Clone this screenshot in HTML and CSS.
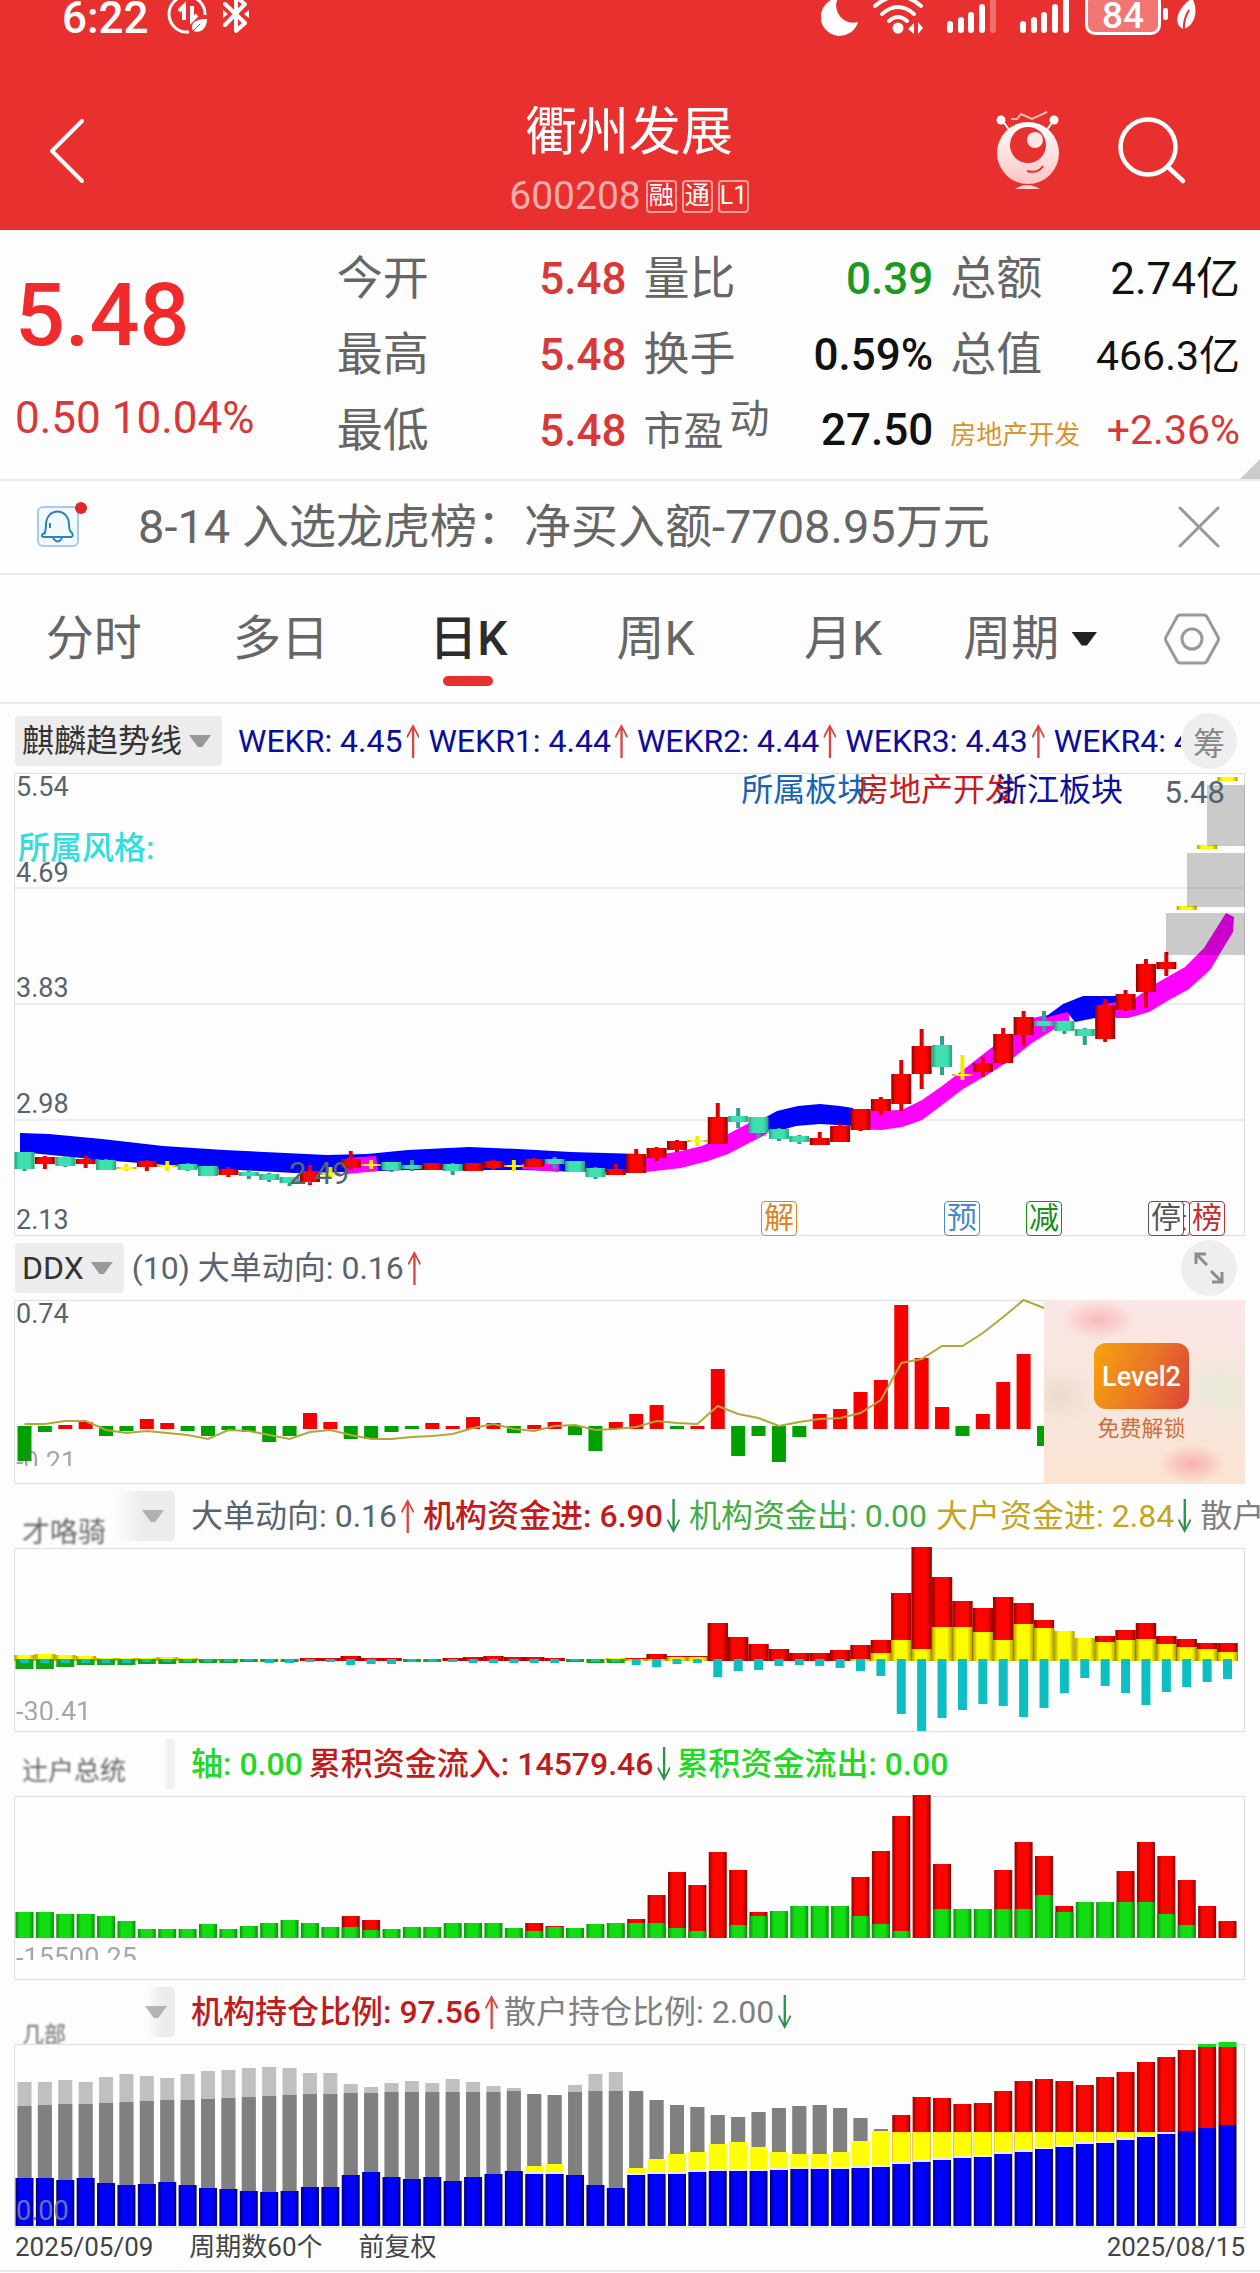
FILE: index.html
```html
<!DOCTYPE html>
<html lang="zh-CN">
<head>
<meta charset="utf-8">
<meta name="viewport" content="width=device-width, initial-scale=1">
<title>衢州发展 600208</title>
<link rel="stylesheet" href="styles.css">
</head>
<body>
<header class="top">
  <div class="status">
    <div class="status-side">
      <span class="clock">6:22</span>
      <svg width="42" height="36" viewBox="166 0 42 36" fill="none" stroke="#fff"><path d="M189 32A18 18 0 1 1 205 15" stroke-width="3"/><path d="M179 11l5-5v14M192 6v14l5-5" stroke-width="4"/><path d="M193 31c-4-10 6-12 14-12 0 8-5 15-14 12z" fill="#fff" stroke="none"/><path d="M191 33l9-9" stroke="#e8302f" stroke-width="1"/></svg>
      <svg width="30" height="36" viewBox="221 0 30 36" fill="none" stroke="#fff" stroke-width="4" stroke-linecap="round" stroke-linejoin="round"><path d="M225 4l20 19-9 8V-3l9 7-20 21"/><path d="M223 10l5 4-5 4zM249 10l-5 4 5 4z" fill="#fff" stroke="none"/></svg>
    </div>
    <div class="status-side">
      <svg width="39" height="36" viewBox="821 0 39 36"><path d="M838-2a17 17 0 0 0 20 24A19 19 0 1 1 838-2z" fill="#fff"/></svg>
      <svg width="60" height="36" viewBox="873 0 60 36" fill="none" stroke="#fff" stroke-width="4" stroke-linecap="round"><path d="M875 6q23-20 46 0M882 14q16-14 32 0M889 21q9-8 18 0"/><circle cx="898" cy="28" r="5.500" fill="#fff" stroke="none"/><path d="M908 29l6-6v11zM918 22v12l5-6z" fill="#fff" stroke="none"/></svg>
      <svg width="60" height="36" viewBox="946 0 60 36" stroke="#fff" stroke-width="6" stroke-linecap="round"><path d="M950 24v6M961 20v10M971 15v15M982 7v23"/><path d="M993 0v30" opacity=".3"/></svg>
      <svg width="53" height="36" viewBox="1019 0 53 36" stroke="#fff" stroke-width="6" stroke-linecap="round"><path d="M1023 24v6M1034 20v10M1044 15v15M1055 7v23M1066 0v30"/></svg>
      <span class="battery">84</span>
      <svg width="34" height="36" viewBox="1162 0 34 36"><rect x="1163" y="8" width="5" height="12" rx="2" fill="#fff"/><path d="M1184 29c-10-3-10-18 8-31 7 12 3 27-8 31z" fill="#fff"/><path d="M1184 30q-1-10 5-20" fill="none" stroke="#e8302f" stroke-width="2"/></svg>
    </div>
  </div>
  <nav class="nav">
    <button class="icon-btn back" aria-label="返回"><svg width="40" height="70" viewBox="48 116 40 70" fill="none" stroke="#fff" stroke-width="4" stroke-linecap="round" stroke-linejoin="round"><path d="M82 121L52 151l30 30"/></svg></button>
    <div class="name">
      <h1>衢州发展</h1>
      <p class="code">600208 <span class="mark">融</span><span class="mark">通</span><span class="mark">L1</span></p>
    </div>
    <div class="nav-right">
      <button class="icon-btn" aria-label="助手"><svg width="66" height="84" viewBox="994 110 66 84"><defs><linearGradient id="face" x1="0" y1="0" x2="0" y2="1"><stop offset="0" stop-color="#fff"/><stop offset="1" stop-color="#ffc4c4"/></linearGradient></defs><g fill="none" stroke="#fff" stroke-width="2"><path d="M1002 120l8 11M1054 120l-8 11"/><path d="M1011 119h6l4-5 11 5 15-7" stroke="#ffb9b9"/></g><circle cx="1001" cy="120" r="4.500" fill="#fff"/><circle cx="1054" cy="120" r="4.500" fill="#fff"/><circle cx="1028" cy="153" r="31" fill="url(#face)"/><circle cx="1028" cy="145" r="18" fill="#e8302f"/><circle cx="1035" cy="140" r="8" fill="#ffe4e4"/><path d="M1027 171q11 3 16-5" fill="none" stroke="#e8302f" stroke-width="2"/><path d="M1015 189q12-8 25 0z" fill="#ffd0d0"/></svg></button>
      <button class="icon-btn" aria-label="搜索"><svg width="72" height="80" viewBox="1116 110 72 80" fill="none" stroke="#fff" stroke-width="4.500" stroke-linecap="round"><circle cx="1148" cy="147" r="27.500"/><path d="M1168 167l15 14"/></svg></button>
    </div>
  </nav>
</header>

<main>
<section class="quote">
  <div class="last"><strong>5.48</strong><span>0.50 10.04%</span></div>
  <dl>
    <div><dt>今开</dt><dd class="up">5.48</dd></div>
    <div><dt>最高</dt><dd class="up">5.48</dd></div>
    <div><dt>最低</dt><dd class="up">5.48</dd></div>
  </dl>
  <dl>
    <div><dt>量比</dt><dd class="down">0.39</dd></div>
    <div><dt>换手</dt><dd>0.59%</dd></div>
    <div><dt class="pe">市盈<sup>动</sup></dt><dd>27.50</dd></div>
  </dl>
  <dl>
    <div><dt>总额</dt><dd class="turnover">2.74亿</dd></div>
    <div><dt>总值</dt><dd class="amount">466.3亿</dd></div>
    <div><dt class="sector">房地产开发</dt><dd class="up amount">+2.36%</dd></div>
  </dl>
</section>

<section class="notice">
  <svg width="56" height="52" viewBox="34 502 56 52" fill="none" stroke="#2f80bd" stroke-width="2"><rect x="38" y="508" width="40" height="39" rx="5" fill="#f1faff" stroke="#a9c9ee"/><path d="M45 534c0-2 1-3 1-8 0-18 23-18 23 0 0 5 1 6 3 8 2 3 0 4-2 4H44c-3 0-3-3 1-4z"/><path d="M53 539q5 7 9 0M50 524v5"/><circle cx="81" cy="509" r="6" fill="#e0282c" stroke="none"/></svg>
  <p>8-14 入选龙虎榜：净买入额-7708.95万元</p>
  <button class="icon-btn" aria-label="关闭"><svg width="42" height="42" viewBox="0 0 42 42" stroke="#999" stroke-width="3" stroke-linecap="round"><path d="M2 2l38 38M40 2L2 40"/></svg></button>
</section>

<nav class="tabs">
  <button>分时</button>
  <button>多日</button>
  <button class="active">日K</button>
  <button>周K</button>
  <button>月K</button>
  <button>周期<span class="caret dark"></span></button>
  <button class="settings" aria-label="设置"><svg width="56" height="52" viewBox="0 0 56 52" fill="none" stroke="#999" stroke-width="3" stroke-linejoin="round"><path d="M16 2h24q2 0 3 2l11 20q1 2 0 4L43 48q-1 2-3 2H16q-2 0-3-2L2 28q-1-2 0-4L13 4q1-2 3-2z"/><circle cx="28" cy="26" r="10"/></svg></button>
</nav>

<section class="panel">
  <div class="head main-head">
    <button class="selector">麒麟趋势线<span class="caret"></span></button>
    <div class="legend navy"><span>WEKR: 4.45<i class="arr up"></i></span><span>WEKR1: 4.44<i class="arr up"></i></span><span>WEKR2: 4.44<i class="arr up"></i></span><span>WEKR3: 4.43<i class="arr up"></i></span><span>WEKR4: 4.43</span></div>
    <button class="round">筹</button>
  </div>
  <div class="plot tall">
    <svg id="candles" viewBox="0 0 1231 463" preserveAspectRatio="none"></svg>
    <span class="axis a1">5.54</span><span class="axis a2">4.69</span><span class="axis a3">3.83</span><span class="axis a4">2.98</span><span class="axis a5">2.13</span>
    <span class="price low">2.49</span><span class="price high">5.48</span>
    <span class="note style-note">所属风格:</span>
    <span class="note board">所属板块:</span><span class="note industry">房地产开发</span><span class="note region">浙江板块</span>
    <span class="tag t1">解</span><span class="tag t2">预</span><span class="tag t3">减</span><span class="tag t4">涨</span><span class="tag t5">停</span><span class="tag t6">榜</span>
  </div>
</section>

<section class="panel">
  <div class="head">
    <button class="selector short">DDX<span class="caret"></span></button>
    <div class="legend slate"><span>(10) 大单动向: 0.16<i class="arr up"></i></span></div>
    <button class="round" aria-label="全屏"><svg width="30" height="32" viewBox="0 0 30 32" fill="none" stroke="#8c8c8c" stroke-width="3"><path d="M2 12V2h10M2 2l11 11M28 20v10H18M28 30L17 19"/></svg></button>
  </div>
  <div class="plot">
    <svg id="ddx" viewBox="0 0 1231 184" preserveAspectRatio="none"></svg>
    <span class="axis a1">0.74</span><span class="axis ghost g1">-0.21</span>
    <a class="promo" href="#level2"><span class="badge">Level2</span>免费解锁</a>
  </div>
</section>

<section class="panel">
  <div class="head">
    <button class="selector faded f3"><span class="smudge">才咯骑</span><span class="caret"></span></button>
    <div class="legend"><span class="slate">大单动向: 0.16<i class="arr up"></i></span><span class="red">机构资金进: 6.90<i class="arr dn"></i></span><span class="leaf">机构资金出: 0.00</span><span class="gold">大户资金进: 2.84<i class="arr dn"></i></span><span class="grey">散户资金进: 0.00</span></div>
  </div>
  <div class="plot">
    <svg id="funds" viewBox="0 0 1231 184" preserveAspectRatio="none"></svg>
    <span class="axis ghost g2">-30.41</span>
  </div>
</section>

<section class="panel">
  <div class="head">
    <button class="selector faded f4"><span class="smudge">辻户总统</span></button>
    <div class="legend tight"><span class="lime">轴: 0.00</span><span class="red">累积资金流入: 14579.46<i class="arr dn"></i></span><span class="lime">累积资金流出: 0.00</span></div>
  </div>
  <div class="plot">
    <svg id="flow" viewBox="0 0 1231 184" preserveAspectRatio="none"></svg>
    <span class="axis ghost g3">-15500.25</span>
  </div>
</section>

<section class="panel">
  <div class="head">
    <button class="selector faded f5"><span class="smudge">几部</span><span class="caret"></span></button>
    <div class="legend tight"><span class="red">机构持仓比例: 97.56<i class="arr up"></i></span><span class="grey">散户持仓比例: 2.00<i class="arr dn"></i></span></div>
  </div>
  <div class="plot">
    <svg id="holding" viewBox="0 0 1231 184" preserveAspectRatio="none"></svg>
    <span class="axis zero">0.00</span>
  </div>
</section>
</main>

<footer class="foot"><span>2025/05/09</span><span>周期数60个</span><span>前复权</span><span class="end">2025/08/15</span></footer>
<script src="charts.js"></script>
</body>
</html>
```
FILE: styles.css
```css
* { box-sizing: border-box; }
body {
  margin: 0;
  background: #fdfdfd;
  color: #333;
  font-family: Roboto, "Noto Sans CJK SC", sans-serif;
}
h1, p, dl, dd { margin: 0; }
button {
  margin: 0;
  padding: 0;
  border: 0;
  background: none;
  color: inherit;
  font: inherit;
}
svg { display: block; }

/* header */
.top { background: #e8302f; color: #fff; padding-bottom: 12px; }
.status {
  display: flex;
  justify-content: space-between;
  height: 40px;
  padding: 0 64px 0 62px;
}
.status-side { display: flex; align-items: flex-start; gap: 13px; }
.clock { font-size: 44px; line-height: 36px; font-weight: 500; margin-right: 4px; }
.battery {
  width: 76px;
  height: 43px;
  margin: -8px -12px 0 0;
  border: 3px solid #fff;
  border-radius: 10px;
  background: #f07573;
  font-size: 37px;
  line-height: 42px;
  font-weight: 500;
  text-align: center;
}
.nav {
  display: grid;
  grid-template-columns: 1fr auto 1fr;
  padding: 62px 72px 0 48px;
}
.icon-btn { display: block; }
.back { align-self: start; padding-top: 14px; }
.name { text-align: center; margin-left: 22px; }
.name h1 { font-size: 52px; line-height: 62px; font-weight: 400; }
.code {
  display: flex;
  align-items: center;
  gap: 5px;
  margin-top: 10px;
  font-size: 39px;
  line-height: 44px;
  color: #f8adad;
}
.mark {
  width: 31px;
  height: 33px;
  border: 2px solid #f6a0a0;
  border-radius: 4px;
  color: #fff;
  font-size: 25px;
  line-height: 28px;
}
.nav-right { display: flex; justify-content: flex-end; gap: 56px; align-items: flex-start; padding-top: 8px; }

/* quote */
.quote {
  position: relative;
  display: grid;
  grid-template-columns: 305fr 290fr 290fr 290fr;
  gap: 17px;
  padding: 9px 20px 12px 15px;
  border-bottom: 2px solid #ebebeb;
}
.quote::after {
  content: "";
  position: absolute;
  right: 0;
  bottom: 0;
  border: 10px solid #ccc;
  border-top-color: transparent;
  border-left-color: transparent;
}
.last { display: flex; flex-direction: column; color: #f12b2b; white-space: nowrap; }
.last strong { font-size: 88px; line-height: 100px; font-weight: 500; margin-top: 26px; }
.last span { font-size: 44px; line-height: 50px; margin-top: 28px; color: #d93838; }
.quote dl > div {
  display: flex;
  justify-content: space-between;
  align-items: baseline;
  height: 76px;
  line-height: 78px;
  white-space: nowrap;
}
.quote dt { font-size: 46px; color: #666; }
.quote dd { font-size: 44px; font-weight: 500; color: #111; }
.quote dd.turnover { font-weight: 400; }
.quote dd.amount { font-size: 41px; font-weight: 400; }
.quote dd.up { color: #d93838; }
.quote dd.down { color: #1c991c; }
.quote dt.pe { font-size: 40px; }
.pe sup { font-size: 40px; line-height: 0; vertical-align: 12px; margin-left: 6px; }
.quote dt.sector { font-size: 26px; color: #d9932f; }

/* notice */
.notice {
  display: flex;
  align-items: center;
  height: 94px;
  padding: 0 40px 0 34px;
  border-bottom: 2px solid #ebebeb;
}
.notice p { flex: 1; margin-left: 48px; font-size: 47px; line-height: 60px; color: #666; white-space: nowrap; }

/* tabs */
.tabs { display: flex; height: 129px; border-bottom: 2px solid #ebebeb; }
.tabs button {
  position: relative;
  display: flex;
  flex: 1;
  align-items: center;
  justify-content: center;
  font-size: 48px;
  line-height: 60px;
  color: #666;
  white-space: nowrap;
}
.tabs .active { color: #2c2c2c; font-weight: 500; }
.tabs .active::after {
  content: "";
  position: absolute;
  bottom: 16px;
  width: 50px;
  height: 10px;
  border-radius: 5px;
  background: #e8302f;
}
.tabs .settings { flex: 0 0 136px; }
.caret {
  flex: none;
  width: 22px;
  height: 12px;
  background: #999;
  clip-path: polygon(0 0, 100% 0, 60% 100%, 40% 100%);
}
.caret.dark { width: 26px; height: 14px; margin-left: 12px; background: #222; }

/* indicator panels */
.head { display: flex; align-items: center; height: 64px; padding: 0 23px 0 15px; overflow: hidden; }
.main-head { height: 69px; padding-top: 5px; }
.selector {
  display: flex;
  flex: none;
  align-items: center;
  gap: 7px;
  height: 50px;
  padding: 0 11px 0 7px;
  border-radius: 4px;
  background: #ececec;
  font-size: 32px;
  line-height: 44px;
  color: #333;
  white-space: nowrap;
}
.legend {
  display: flex;
  flex: 1;
  gap: 9px;
  min-width: 0;
  margin-left: 16px;
  overflow: hidden;
  font-size: 32px;
  line-height: 44px;
  white-space: nowrap;
}
.legend.tight { gap: 6px; }
.short + .legend { margin-left: 8px; }
.faded + .legend { margin-right: -23px; }
.legend span { flex: none; }
.navy { color: #0d0d99; }
.slate { color: #5a6470; }
.red { color: #c01c1c; font-weight: 500; }
.leaf { color: #46ad46; }
.gold { color: #c3a51f; }
.lime { color: #22d822; font-weight: 500; }
.grey { color: #808080; }
.arr {
  display: inline-block;
  width: 13px;
  height: 34px;
  margin-left: 4px;
  vertical-align: -6px;
  background: #d8463f;
  clip-path: polygon(50% 0, 100% 36%, 92% 42%, 60% 18%, 60% 100%, 42% 100%, 42% 18%, 8% 42%, 0 36%);
}
.arr.dn {
  background: #299447;
  clip-path: polygon(50% 100%, 100% 64%, 92% 58%, 60% 82%, 60% 0, 42% 0, 42% 82%, 8% 58%, 0 64%);
}
.round {
  display: flex;
  flex: none;
  align-items: center;
  justify-content: center;
  width: 56px;
  height: 56px;
  border-radius: 50%;
  background: #eee;
  color: #888;
  font-size: 32px;
}
.faded {
  justify-content: flex-end;
  width: 160px;
  background: linear-gradient(90deg, transparent 62%, #ececec 80%);
}
.faded .caret { opacity: .7; }
.faded .smudge { flex: 1; text-align: left; color: #666; filter: blur(1px); line-height: 30px; }
.f3 .smudge { font-size: 28px; padding-top: 34px; }
.f4 { background: linear-gradient(90deg, transparent 92%, #f0f0f0 96%); }
.f4 .smudge { font-size: 26px; padding-top: 14px; }
.f5 { background: linear-gradient(90deg, transparent 82%, #ececec 92%); padding-right: 8px; }
.f5 .smudge { font-size: 22px; padding-top: 46px; }

.plot { position: relative; height: 184px; margin: 0 15px 0 14px; box-shadow: inset 0 0 0 1px #ddd; }
.plot.tall { height: 463px; }
.plot svg { position: absolute; width: 100%; height: 100%; overflow: visible; }
.axis, .price, .note, .tag { position: absolute; white-space: nowrap; }
.axis { left: 2px; font-size: 27px; line-height: 28px; color: #566470; }
.a1 { top: 0; }
.a2 { top: 86px; }
.a3 { top: 201px; }
.a4 { top: 317px; }
.a5 { top: 433px; }
.ghost { opacity: .55; }
.g1 { bottom: 8px; clip-path: inset(0 0 10px 0); }
.g2 { bottom: 6px; clip-path: inset(0 0 6px 0); }
.g3 { bottom: 8px; clip-path: inset(0 0 12px 0); }
.zero { bottom: 3px; color: #6a70b4; }
.price { font-size: 31px; line-height: 32px; color: #56646f; }
.low { left: 275px; top: 385px; }
.high { right: 20px; top: 4px; }
.note { font-size: 32px; line-height: 34px; }
.style-note { left: 4px; top: 58px; color: #2fdede; font-weight: 500; }
.board { right: 368px; top: 0; color: #1763b5; }
.industry { right: 228px; top: 0; color: #c81e1e; }
.region { right: 122px; top: 0; color: #0d0d9e; }
.tag {
  bottom: 0;
  width: 36px;
  height: 35px;
  border: 1px solid currentColor;
  border-radius: 4px;
  background: #fdfdfd;
  font-size: 30px;
  line-height: 32px;
  text-align: center;
}
.t1 { right: 448px; color: #d9862b; }
.t2 { right: 265px; color: #4a8ac8; }
.t3 { right: 183px; color: #1a8c1a; }
.t4 { right: 55px; color: #c03030; }
.t5 { right: 61px; color: #555; }
.t6 { right: 20px; color: #c03030; }
.promo {
  position: absolute;
  top: 0;
  right: 0;
  bottom: 0;
  display: flex;
  flex-direction: column;
  align-items: center;
  width: 201px;
  padding: 43px 6px 0 0;
  background:
    radial-gradient(ellipse 38px 20px at 54px 20px, #f9b9b9, transparent),
    radial-gradient(ellipse 34px 20px at 148px 164px, #f8b0ac, transparent),
    radial-gradient(ellipse 40px 34px at 176px 90px, #e6ead6, transparent),
    radial-gradient(ellipse 34px 30px at 16px 96px, #eadccb, transparent),
    linear-gradient(#fbe6e6, #f6e6de 50%, #fbe4d3);
  color: #cf6e3a;
  font-size: 22px;
  line-height: 40px;
  text-decoration: none;
}
.badge {
  width: 95px;
  height: 66px;
  border-radius: 12px;
  background: linear-gradient(110deg, #f7a30c, #e8702a 60%, #dd4338);
  color: #fff;
  font-size: 27px;
  line-height: 68px;
  font-weight: 500;
  text-align: center;
}

.foot {
  display: flex;
  gap: 36px;
  height: 44px;
  padding: 0 15px;
  border-bottom: 2px solid #ebebeb;
  font-size: 26px;
  line-height: 38px;
  color: #444;
}
.foot .end { margin-left: auto; }
```
FILE: charts.js
```js
// All series hold one entry per trading day, as y positions inside the plot.
const STEP = 20.39;
const cx = i => 10.5 + STEP * i;
const bar = (i, w, top, bottom, fill) =>
  `<rect x="${cx(i) - w / 2}" y="${top}" width="${w}" height="${Math.max(bottom - top, 1)}" fill="${fill}"/>`;

const gradient = (id, edge, mid) =>
  `<linearGradient id="${id}"><stop offset="0" stop-color="${edge}"/><stop offset=".22" stop-color="${mid}"/><stop offset=".75" stop-color="${mid}"/><stop offset="1" stop-color="${edge}"/></linearGradient>`;
const defs = '<defs>' +
  gradient('gRed', '#8e0000', '#fb0500') +
  gradient('gTeal', '#2a9f7c', '#3de0ae') +
  gradient('gGreen', '#0a8d0a', '#12dc12') +
  gradient('gYellow', '#a99d00', '#fffb00') +
  gradient('gBlue', '#000070', '#0000ff') + '</defs>';

function candles() {
  const grid = [115, 231, 347].map(y => `<path d="M1 ${y}H1231" stroke="#ddd"/>`).join('');
  const bands = [
    ['#0000ff', '6,360 35,361 88,366 149,373 210,377 313,382 353,381 394,377 455,374 504,376 557,379 626,381 626,400 598,400 508,397 394,397 333,399 280,400 190,395 88,387 6,379'],
    ['#ff00ff', '333,385 362,383 364,398 333,401'],
    ['#ff00ff', '508,391 545,391 545,399 508,396'],
    ['#ff00ff', '632,384 667,378 688,373 714,361 735,350 753,344 753,361 735,370 714,381 694,388 667,395 632,399'],
    ['#0000ff', '745,348 763,338 784,333 806,331 826,333 839,335 839,353 806,351 782,353 757,360'],
    ['#ff00ff', '856,338 888,337 908,327 928,313 949,297 977,275 998,263 1018,245 1039,241 1055,238 1055,248 1039,257 1018,270 998,286 973,302 949,316 928,332 908,347 888,354 867,357 840,356'],
    ['#0000ff', '1030,245 1049,231 1069,223 1102,223 1102,234 1081,245 1061,249 1053,239'],
    ['#ff00ff', '1085,232 1120,226 1141,211 1171,194 1190,175 1212,140 1220,144 1219,159 1196,197 1175,216 1155,227 1135,239 1114,245 1102,245']
  ].map(([c, p]) => `<polygon fill="${c}" points="${p}"/>`).join('');
  const limits = [[1152, 140, 42], [1173, 80, 54], [1193, 12, 61]]
    .map(([x, y, h]) => `<rect x="${x}" y="${y}" width="${1231 - x}" height="${h}" fill="rgba(0,0,0,.2)"/>`).join('');
  // direction, body top, body bottom, high, low
  const days = [
    ['t',379,396,379,398],['r',384,391,383,396],['t',384,393,383,394],['r',386,391,383,395],['t',387,397,386,397],['y',394,396,391,398],
    ['r',388,394,387,398],['y',392,394,388,398],['t',391,397,390,398],['t',393,403,393,403],['r',396,402,394,404],['t',399,403,397,406],
    ['t',401,407,400,409],['t',404,410,404,413],['r',398,409,392,412],['y',400,402,394,406],['r',386,395,378,397],['y',391,393,387,396],
    ['t',389,397,389,399],['t',392,396,387,398],['r',390,397,390,397],['t',391,398,390,402],['r',390,398,390,398],['r',388,395,387,397],
    ['y',392,394,387,398],['r',386,394,385,394],['t',386,391,384,396],['t',388,399,388,399],['t',395,404,394,406],['r',396,402,391,402],
    ['r',381,400,376,400],['r',375,385,374,388],['r',368,377,367,379],['y',367,369,363,373],['r',344,371,330,371],['t',343,349,335,355],
    ['t',344,360,344,365],['t',356,366,355,368],['t',363,369,362,371],['r',365,372,359,372],['r',353,369,351,369],['r',336,357,336,358],
    ['r',326,338,324,342],['r',301,331,287,338],['r',273,301,256,316],['t',272,294,263,302],['y',301,303,282,307],['r',290,299,284,304],
    ['r',261,290,255,291],['r',244,262,238,273],['t',248,253,238,259],['t',248,258,247,261],['t',256,263,255,272],['r',232,266,226,269],
    ['r',221,237,217,238],['r',191,219,186,235],['r',189,196,179,203],['y',133,137,133,137],['y',72,76,72,76],['y',4,8,4,8]
  ];
  const fills = { r: 'url(#gRed)', t: 'url(#gTeal)', y: 'url(#gYellow)' };
  const wicks = { r: '#e00000', t: '#2f9f96', y: '#f5e800' };
  const marks = days.map(([k, t, b, h, l], i) => bar(i, 4, h, l, wicks[k]) + bar(i, 20, t, b, fills[k])).join('');
  return grid + bands + marks + limits;
}

function ddx() {
  // negative numbers are outflow bars that end at that depth
  const v = [-161,-132,125,122,-136,-131,119,123,-131,-136,-130,-132,-142,-136,113,122,-139,-139,-132,-129,123,126,117,123,-133,125,122,-135,-151,122,
    114,105,-129,126,69,-156,-136,-162,-137,114,109,92,80,5,58,107,-136,114,82,54,-146];
  const line = [124,124,121,121,130,133,131,133,135,139,130,131,135,139,132,130,135,139,139,137,136,134,128,124,129,131,126,125,130,129,
    127,121,123,124,106,114,118,126,122,119,118,113,100,63,59,46,46,33,17,0,8];
  return v.map((y, i) => y < 0 ? bar(i, 14, 126, -y, '#00a000') : bar(i, 14, y, 129, '#f80000')).join('') +
    `<polyline fill="none" stroke="#b0a838" stroke-width="2" points="${line.map((y, i) => cx(i) + ',' + y).join(' ')}"/>`;
}

function funds() {
  // red top, yellow top, green depth, cyan depth
  const v = [
    [0,107,121,115],[0,106,121,115],[0,107,119,115],[0,108,117,115],[0,110,117,115],[0,110,117,115],[0,110,116,114],[0,109,116,114],[0,110,115,114],[0,111,115,114],
    [0,111,115,114],[0,0,114,113],[0,0,114,115],[0,0,114,115],[110,0,0,114],[110,0,0,114],[108,0,0,117],[110,0,0,116],[110,0,0,116],[0,0,114,114],
    [0,0,114,114],[110,0,0,114],[109,0,0,115],[108,0,0,115],[109,0,0,115],[109,0,0,115],[110,0,0,115],[0,0,114,113],[0,0,115,114],[0,110,115,114],
    [110,111,0,117],[106,111,0,119],[108,109,0,116],[108,109,0,115],[75,0,0,129],[89,0,0,123],[96,0,0,122],[101,0,0,118],[105,0,0,117],[105,0,0,118],
    [102,0,0,120],[97,111,0,123],[92,105,0,128],[45,92,0,166],[-1,101,0,183],[29,79,0,170],[53,79,0,162],[60,84,0,156],[49,92,0,158],[55,76,0,169],
    [72,80,0,160],[0,83,0,145],[0,90,0,130],[88,94,0,138],[82,92,0,145],[75,91,0,157],[88,96,0,144],[91,99,0,139],[95,101,0,134],[95,104,0,131]
  ];
  return v.map(([r, y, g, c], i) =>
    (r ? bar(i, 20.4, r, 113, 'url(#gRed)') : '') +
    (y ? bar(i, 20.4, y, 113, 'url(#gYellow)') : '') +
    (g ? bar(i, 18, 111, g, '#13a513') : '') +
    bar(i, 9, 111, c, '#0dbfc0')).join('');
}

function flow() {
  // inflow top, outflow top
  const v = [[0,116],[0,116],[0,118],[0,118],[0,120],[0,125],[0,133],[0,133],[0,133],[0,128],[0,133],[0,130],[0,127],[0,124],[0,127],[0,131],[120,131],[124,134],[0,133],[0,131],
    [0,131],[0,127],[0,127],[0,127],[0,132],[127,135],[130,131],[0,132],[0,128],[0,127],[123,127],[99,127],[76,132],[89,135],[56,0],[74,129],[116,120],[0,115],[0,110],[0,110],
    [0,110],[81,120],[55,128],[20,135],[-1,0],[68,113],[0,113],[0,113],[74,113],[46,113],[60,99],[110,116],[0,106],[0,106],[75,106],[46,106],[60,118],[84,129],[110,0],[125,0]];
  return v.map(([r, g], i) =>
    (r ? bar(i, 18, r, 142, 'url(#gRed)') : '') + (g ? bar(i, 18, g, 142, 'url(#gGreen)') : '')).join('');
}

function holding() {
  // light grey top, grey top, blue top, yellow top
  const early = [[38,62,134],[38,61,134],[36,60,136],[38,60,134],[33,59,139],[30,58,141],[32,57,140],[34,56,138],[30,56,141],[27,55,144],
    [26,54,145],[24,53,147],[23,52,148],[24,51,147],[29,50,143],[29,50,143],[40,49,131],[43,49,128],[39,48,133],[37,48,135],
    [39,48,133],[35,48,137],[38,48,133],[42,48,130],[44,47,127],[50,50,130,122],[51,51,130,120],[41,48,131],[30,47,141],[28,47,144],
    [47,47,131,124],[56,56,130,115],[61,61,130,110],[63,63,128,108],[71,71,127,100],[73,73,127,98],[68,68,127,103],[64,64,126,108],[62,62,125,110],[61,61,125,110],
    [64,64,125,108],[74,74,124,97],[85,85,123,87]];
  // red top, blue top, green top
  const late = [[71,120],[53,118],[54,116],[60,114],[59,113],[47,110],[37,108],[35,105],[37,103],[41,100],[33,99],[28,96],[18,93],[13,90],[6,87],[3,84,0],[3,81,-2]];
  return early.map(([l, g, b, y], i) =>
    bar(i, 14, l, 182, '#c0c0c0') + bar(i, 14, g, 182, '#808080') +
    (y ? bar(i, 18, y, b - 2, '#ffff00') + bar(i, 18, b - 2, b, '#e8e8ff') : '') +
    bar(i, 18, b, 182, 'url(#gBlue)')).join('') +
    late.map(([r, b, top], n) => {
      const i = n + 43;
      return bar(i, 18, r, b, 'url(#gRed)') +
        (b > 88 ? bar(i, 18, 88, b - 1, '#ffff00') + bar(i, 18, b - 2, b, '#e8e8ff') : '') +
        bar(i, 18, b, 182, 'url(#gBlue)') +
        (top !== undefined ? bar(i, 18, top, r, '#12dc12') : '');
    }).join('');
}

Object.entries({ candles, ddx, funds, flow, holding }).forEach(([id, draw]) => {
  document.getElementById(id).innerHTML = (id === 'candles' ? defs : '') + draw();
});
```
